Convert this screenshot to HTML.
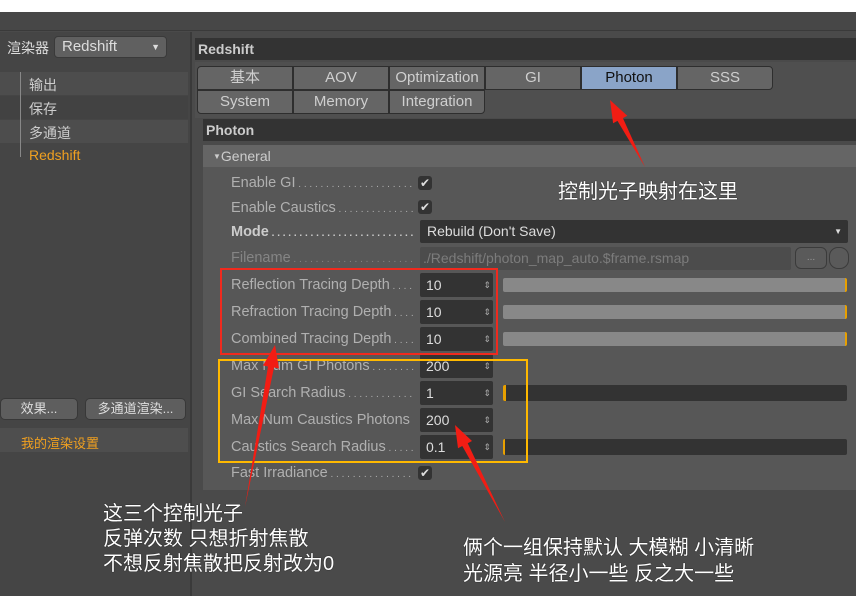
<!DOCTYPE html>
<html><head><meta charset="utf-8"><style>
*{margin:0;padding:0;box-sizing:border-box}
body{width:856px;height:596px;overflow:hidden;background:#4a4a4a;font-family:"Liberation Sans","Noto Sans CJK SC",sans-serif;position:relative;font-size:14px;color:#c4c4c4}
.a{position:absolute}
.tab{position:absolute;height:24px;width:96px;border:1px solid #2e2e2e;background:#656565;color:#cfcfcf;text-align:center;line-height:22px;font-size:15px}
.lbl{position:absolute;left:231px;width:183px;height:20px;line-height:20px;color:#b0b0b0;font-size:14.5px;white-space:nowrap;overflow:hidden}
.lbl::after{content:" . . . . . . . . . . . . . . . . . . . . . . . . . . . . . . . . . .";font-size:10px;letter-spacing:0}
.lbl.nd::after{content:none}
.fld{position:absolute;left:420px;width:73px;height:24px;background:#333;border-radius:2px;color:#ddd;padding-left:6px;line-height:24px;font-size:14px}
.fld::after{content:"⇕";position:absolute;right:2px;top:0;font-size:9px;color:#aaa}
.sl{position:absolute;left:503px;width:344px;height:14px;border-radius:2px}
.chk{position:absolute;left:418px;width:14px;height:14px;background:#333;border-radius:3px;color:#ddd;font-size:12px;line-height:14px;text-align:center}
.ann{position:absolute;color:#fff;font-size:20px;white-space:nowrap;text-shadow:0 0 1px #000}
</style></head><body>
<div class="a" style="left:0;top:0;width:856px;height:12px;background:#fff"></div>
<div class="a" style="left:0;top:12px;width:856px;height:19px;background:#474747;border-bottom:1px solid #3a3a3a"></div>
<div class="a" style="left:0;top:32px;width:190px;height:564px;background:#454545"></div>
<div class="a" style="left:190px;top:32px;width:2px;height:564px;background:#3a3a3a"></div>
<div class="a" style="left:7px;top:38px;font-size:14px;color:#ddd">渲染器</div>
<div class="a" style="left:54px;top:36px;width:113px;height:22px;background:#606060;border-radius:4px;border:1px solid #3a3a3a;color:#ddd;padding-left:7px;line-height:20px;font-size:15px">Redshift<span style="position:absolute;right:6px;top:0;font-size:9px">▼</span></div>
<div class="a" style="left:0;top:72px;width:188px;height:23px;background:#4d4d4d"></div>
<div class="a" style="left:0;top:96px;width:188px;height:23px;background:#424242"></div>
<div class="a" style="left:0;top:120px;width:188px;height:23px;background:#4d4d4d"></div>
<div class="a" style="left:20px;top:72px;width:1px;height:85px;background:#888"></div>
<div class="a" style="left:29px;top:75px;color:#ccc">输出</div>
<div class="a" style="left:29px;top:99px;color:#ccc">保存</div>
<div class="a" style="left:29px;top:123px;color:#ccc">多通道</div>
<div class="a" style="left:29px;top:147px;color:#f0a020">Redshift</div>
<div class="a" style="left:0;top:398px;width:78px;height:22px;background:#5e5e5e;border-radius:5px;border:1px solid #383838;text-align:center;line-height:20px;color:#ddd;font-size:13px">效果...</div>
<div class="a" style="left:85px;top:398px;width:101px;height:22px;background:#5e5e5e;border-radius:5px;border:1px solid #383838;text-align:center;line-height:20px;color:#ddd;font-size:13px">多通道渲染...</div>
<div class="a" style="left:0;top:428px;width:188px;height:24px;background:#4e4e4e"></div>
<div class="a" style="left:21px;top:433px;color:#f0a020;font-size:13px">我的渲染设置</div>

<div class="a" style="left:195px;top:38px;width:661px;height:22px;background:#333;color:#ccc;font-weight:bold;padding-left:3px;line-height:22px;font-size:14px">Redshift</div>
<div class="a" style="left:195px;top:62px;width:661px;height:56px;background:#4f4f4f"></div>
<div class="tab" style="left:197px;top:66px;border-top-left-radius:4px">基本</div>
<div class="tab" style="left:293px;top:66px">AOV</div>
<div class="tab" style="left:389px;top:66px">Optimization</div>
<div class="tab" style="left:485px;top:66px">GI</div>
<div class="tab" style="left:581px;top:66px;background:#8aa4c8;color:#111">Photon</div>
<div class="tab" style="left:677px;top:66px;border-top-right-radius:4px;border-bottom-right-radius:4px">SSS</div>
<div class="tab" style="left:197px;top:90px;border-bottom-left-radius:4px">System</div>
<div class="tab" style="left:293px;top:90px">Memory</div>
<div class="tab" style="left:389px;top:90px;border-bottom-right-radius:4px">Integration</div>
<div class="a" style="left:203px;top:119px;width:653px;height:22px;background:#333;color:#ccc;font-weight:bold;padding-left:3px;line-height:22px">Photon</div>
<div class="a" style="left:203px;top:145px;width:653px;height:22px;background:#656565;color:#ccc;padding-left:10px;line-height:22px"><span style="font-size:8px;vertical-align:2px">▼</span>General</div>
<div class="a" style="left:203px;top:167px;width:653px;height:323px;background:#575757"></div>

<div class="lbl" style="top:173px">Enable GI</div><div class="chk" style="top:176px">✔</div>
<div class="lbl" style="top:198px">Enable Caustics</div><div class="chk" style="top:200px">✔</div>
<div class="lbl" style="top:222px;font-weight:bold;color:#ccc">Mode</div>
<div class="a" style="left:420px;top:220px;width:428px;height:23px;background:#333;border-radius:2px;color:#ddd;padding-left:7px;line-height:23px">Rebuild (Don't Save)<span style="position:absolute;right:6px;font-size:8px">▼</span></div>
<div class="lbl" style="top:248px;color:#858585">Filename</div>
<div class="a" style="left:420px;top:247px;width:371px;height:23px;background:#4c4c4c;border-radius:2px;color:#7c7c7c;padding-left:3px;line-height:23px">./Redshift/photon_map_auto.$frame.rsmap</div>
<div class="a" style="left:795px;top:247px;width:32px;height:22px;border:1px solid #3b3b3b;border-radius:6px;background:#5a5a5a;color:#999;text-align:center;font-size:10px;line-height:20px">...</div>
<div class="a" style="left:829px;top:247px;width:20px;height:22px;border:1px solid #3b3b3b;border-radius:9px;background:#5a5a5a"></div>

<div class="lbl" style="top:275px">Reflection Tracing Depth</div><div class="fld" style="top:273px">10</div><div class="sl" style="top:278px;background:#888;border-right:2px solid #e8a000"></div>
<div class="lbl" style="top:302px">Refraction Tracing Depth</div><div class="fld" style="top:300px">10</div><div class="sl" style="top:305px;background:#888;border-right:2px solid #e8a000"></div>
<div class="lbl" style="top:329px">Combined Tracing Depth</div><div class="fld" style="top:327px">10</div><div class="sl" style="top:332px;background:#888;border-right:2px solid #e8a000"></div>
<div class="lbl" style="top:356px">Max Num GI Photons</div><div class="fld" style="top:354px">200</div>
<div class="lbl" style="top:383px">GI Search Radius</div><div class="fld" style="top:381px">1</div><div class="sl" style="top:385px;background:#333;border-left:3px solid #e8a000;height:16px"></div>
<div class="lbl nd" style="top:410px;width:188px">Max Num Caustics Photons</div><div class="fld" style="top:408px">200</div>
<div class="lbl" style="top:437px">Caustics Search Radius</div><div class="fld" style="top:435px">0.1</div><div class="sl" style="top:439px;background:#333;border-left:2px solid #e8a000;height:16px"></div>
<div class="lbl" style="top:463px">Fast Irradiance</div><div class="chk" style="top:466px">✔</div>

<div class="a" style="left:220px;top:268px;width:278px;height:87px;border:2px solid #f02a1e"></div>
<div class="a" style="left:218px;top:359px;width:310px;height:104px;border:2px solid #ffb900"></div>

<svg class="a" style="left:0;top:0" width="856" height="596">
<polygon fill="#f21d14" points="645,167 617.5,120.9 613.1,123.2 610,100 627.3,115.8 622.9,118.1"/>
<polygon fill="#f21d14" points="245,507 268,366.5 263,365.5 275,345 279,368.5 274,367.5"/>
<polygon fill="#f21d14" points="505,522 462.3,446 458,448.3 455,425 472,441 467.7,443.2"/>
</svg>

<div class="ann" style="left:558px;top:175px">控制光子映射在这里</div>
<div class="ann" style="left:103px;top:502px;line-height:25px">这三个控制光子<br>反弹次数 只想折射焦散<br>不想反射焦散把反射改为0</div>
<div class="ann" style="left:463px;top:535px;line-height:26px">俩个一组保持默认 大模糊 小清晰<br>光源亮 半径小一些 反之大一些</div>
</body></html>
